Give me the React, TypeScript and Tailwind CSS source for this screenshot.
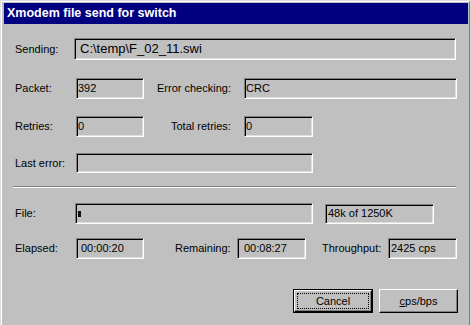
import React from 'react';

// Win95 style sunken read-only field
const Field: React.FC<{ w: string; h?: string; pad?: string; big?: boolean; children?: React.ReactNode }> = ({
  w,
  h = 'h-[21px]',
  pad = 'pl-[2px]',
  big,
  children,
}) => (
  <div
    className={`${w} ${h} ${pad} flex items-center border border-t-[#808080] border-l-[#808080] border-b-white border-r-white shadow-[inset_1px_1px_0_#000,inset_-1px_-1px_0_#dfdfdf] ${
      big ? 'text-[13px]' : 'text-[11px]'
    } whitespace-nowrap`}
  >
    {children}
  </div>
);

const Label: React.FC<{ w: string; pad?: string; children: React.ReactNode }> = ({ w, pad = '', children }) => (
  <div className={`${w} ${pad} text-[11px] whitespace-nowrap`}>{children}</div>
);

const App: React.FC = () => {
  return (
    <div className="w-[471px] h-[325px] overflow-hidden bg-[#c0c0c0] border-l border-t border-r border-l-[#dfdfdf] border-t-[#dfdfdf] border-r-[#d4d4d4] font-['Liberation_Sans',Arial,sans-serif] text-black">
      <div className="h-full border-l border-t border-r border-l-white border-t-white border-r-[#808080] pt-[1px] pl-[2px]">
        {/* Title bar */}
        <div className="w-[464px] h-[21px] bg-[#000080] flex items-center pl-[3px]">
          <span className="text-white font-bold text-[12.5px]">Xmodem file send for switch</span>
        </div>

        <div className="pl-[11px]">
          {/* Sending */}
          <div className="mt-[14px] flex items-center">
            <Label w="w-[59px]">Sending:</Label>
            <Field w="w-[382px]" h="h-[22px]" pad="pl-[5px]" big>
              C:\temp\F_02_11.swi
            </Field>
          </div>

          {/* Packet / Error checking */}
          <div className="mt-[18px] flex items-center">
            <Label w="w-[61px]">Packet:</Label>
            <Field w="w-[68px]" pad="pl-[1px]">392</Field>
            <Label w="w-[100px]" pad="pl-[13px]">Error checking:</Label>
            <Field w="w-[213px]" pad="pl-[1px]">CRC</Field>
          </div>

          {/* Retries */}
          <div className="mt-[17px] flex items-center">
            <Label w="w-[61px]">Retries:</Label>
            <Field w="w-[68px]" pad="pl-[1px]">0</Field>
            <Label w="w-[100px]" pad="pl-[27px]">Total retries:</Label>
            <Field w="w-[69px]" pad="pl-[1px]">0</Field>
          </div>

          {/* Last error */}
          <div className="mt-[16px] flex items-center">
            <Label w="w-[61px]">Last error:</Label>
            <Field w="w-[237px]" h="h-[20px]" />
          </div>

          {/* Separator */}
          <div className="mt-[13px] -ml-[2px] w-[443px] border-t border-b border-t-[#808080] border-b-white" />

          {/* File progress */}
          <div className="mt-[15px] flex items-center">
            <Label w="w-[60px]">File:</Label>
            <Field w="w-[238px]" pad="pl-[2px]">
              <div className="w-[3px] h-[6px] bg-[#101010]" />
            </Field>
            <div className="ml-[12px]">
              <Field w="w-[109px]" h="h-[20px]" pad="pl-[2px]">48k of 1250K</Field>
            </div>
          </div>

          {/* Times */}
          <div className="mt-[14px] flex items-center">
            <Label w="w-[61px]">Elapsed:</Label>
            <Field w="w-[68px]" pad="pl-[4px]">00:00:20</Field>
            <Label w="w-[93px]" pad="pl-[31px]">Remaining:</Label>
            <Field w="w-[69px]" pad="pl-[6px]">00:08:27</Field>
            <Label w="w-[82px]" pad="pl-[16px]">Throughput:</Label>
            <Field w="w-[69px]" pad="pl-[2px]">2425 cps</Field>
          </div>

          {/* Buttons */}
          <div className="mt-[30px] flex items-center pl-[278px] gap-[6px]">
            <button className="w-[80px] h-[24px] border border-black p-0 bg-[#c0c0c0]">
              <div className="w-full h-full border border-t-white border-l-white border-b-black border-r-black shadow-[inset_-1px_-1px_0_#808080] flex items-center justify-center p-[2px]">
                <div className="w-full h-full border border-dotted border-black flex items-center justify-center text-[11px]">
                  Cancel
                </div>
              </div>
            </button>
            <button className="w-[79px] h-[24px] border border-t-white border-l-white border-b-black border-r-black shadow-[inset_-1px_-1px_0_#808080] bg-[#c0c0c0] flex items-center justify-center text-[11px]">
              <span>
                <span className="underline">c</span>ps/bps
              </span>
            </button>
          </div>
        </div>
      </div>
    </div>
  );
};

export default App;
